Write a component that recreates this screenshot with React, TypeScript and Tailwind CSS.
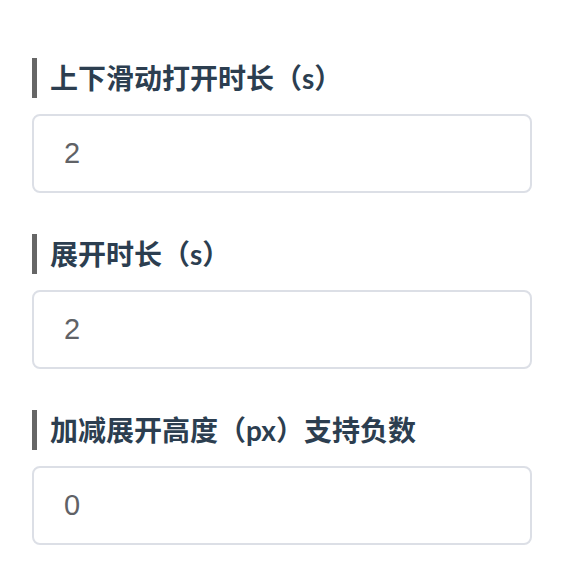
const fields = [
  { label: "上下滑动打开时长（s）", value: "2" },
  { label: "展开时长（s）", value: "2" },
  { label: "加减展开高度（px）支持负数", value: "0" },
];

export default function App() {
  return (
    <div className="w-[568px] h-[580px] bg-white pt-[58px] px-[32px] overflow-hidden">
      {fields.map((f, i) => (
        <div key={i} className="mb-[41px]">
          <div className="flex items-center h-[40px] border-l-[5px] border-[#666666] pl-[13px]">
            <span className="text-[28px] font-bold text-[#2c3e50] leading-none [font-family:Lato,'Noto_Sans_CJK_SC',sans-serif]">
              {f.label}
            </span>
          </div>
          <div className="mt-[16px] h-[79px] w-[500px] border-2 border-[#dcdfe6] rounded-[8px] flex items-center pl-[30px]">
            <span className="text-[29px] text-[#606266] [font-family:'Liberation_Sans',Arial,sans-serif]">
              {f.value}
            </span>
          </div>
        </div>
      ))}
    </div>
  );
}
